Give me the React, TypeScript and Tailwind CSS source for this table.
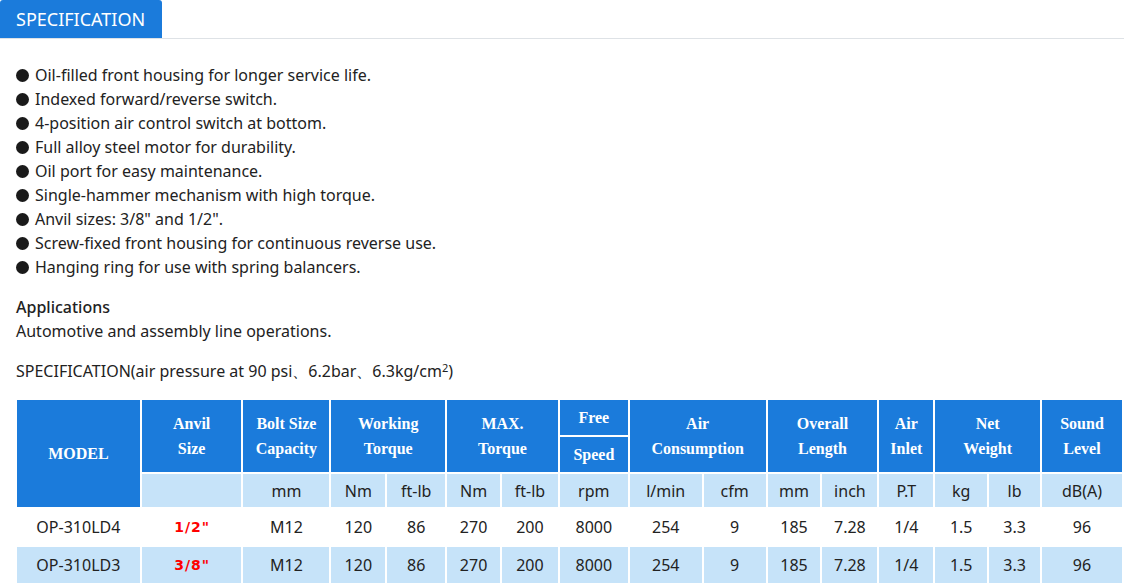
const features = [
  "Oil-filled front housing for longer service life.",
  "Indexed forward/reverse switch.",
  "4-position air control switch at bottom.",
  "Full alloy steel motor for durability.",
  "Oil port for easy maintenance.",
  "Single-hammer mechanism with high torque.",
  'Anvil sizes: 3/8" and 1/2".',
  "Screw-fixed front housing for continuous reverse use.",
  "Hanging ring for use with spring balancers.",
];

const rows = [
  { model: "OP-310LD4", anvil: '1/2"', vals: ["M12", "120", "86", "270", "200", "8000", "254", "9", "185", "7.28", "1/4", "1.5", "3.3", "96"] },
  { model: "OP-310LD3", anvil: '3/8"', vals: ["M12", "120", "86", "270", "200", "8000", "254", "9", "185", "7.28", "1/4", "1.5", "3.3", "96"] },
];

const units = ["", "mm", "Nm", "ft-lb", "Nm", "ft-lb", "rpm", "l/min", "cfm", "mm", "inch", "P.T", "kg", "lb", "dB(A)"];
const widths = [123, 100, 86, 54, 58, 53, 56, 68, 72, 62, 53, 55, 54, 52, 51, 80];

const th = "bg-[#1b7bdb] text-white font-bold text-[16px] leading-[25px] text-center align-middle font-['Liberation_Serif',serif] p-0";
const unitTd = "bg-[#c6e3f9] h-[33px] text-center p-0";

export default function App() {
  return (
    <div className="min-h-[583px] w-[1124px] overflow-hidden bg-white font-['Noto_Sans',sans-serif] text-[#222]">
      <div className="flex border-b border-[#dee2e6]">
        <div className="h-[38px] w-[162px] rounded-t-[3px] bg-[#1b7bdb] pl-4 text-[18px] leading-[38px] text-white">
          SPECIFICATION
        </div>
      </div>

      <ul className="mt-[24px] pl-4 text-[16px] leading-[24px]">
        {features.map((f) => (
          <li key={f} className="flex items-center gap-[6px]">
            <span className="h-[13px] w-[13px] shrink-0 rounded-full bg-[#1a1a1a]" />
            <span>{f}</span>
          </li>
        ))}
      </ul>

      <div className="mt-[16px] pl-4 text-[16px] leading-[24px]">
        <div className="font-medium">Applications</div>
        <div>Automotive and assembly line operations.</div>
      </div>

      <div className="mt-[16px] pl-4 text-[16px] leading-[24px]">
        SPECIFICATION(air pressure at 90 psi、6.2bar、6.3kg/cm<sup className="text-[11px]">2</sup>)
      </div>

      <table className="ml-[15px] mt-[15px] table-fixed border-separate border-spacing-[2px] text-[16px]">
        <colgroup>
          {widths.map((w, i) => (
            <col key={i} style={{ width: w }} />
          ))}
        </colgroup>
        <thead>
          <tr className="h-[35px]">
            <th rowSpan={3} className={th}>MODEL</th>
            <th rowSpan={2} className={th}>Anvil<br />Size</th>
            <th rowSpan={2} className={th}>Bolt Size<br />Capacity</th>
            <th rowSpan={2} colSpan={2} className={th}>Working<br />Torque</th>
            <th rowSpan={2} colSpan={2} className={th}>MAX.<br />Torque</th>
            <th className={th}>Free</th>
            <th rowSpan={2} colSpan={2} className={th}>Air<br />Consumption</th>
            <th rowSpan={2} colSpan={2} className={th}>Overall<br />Length</th>
            <th rowSpan={2} className={th}>Air<br />Inlet</th>
            <th rowSpan={2} colSpan={2} className={th}>Net<br />Weight</th>
            <th rowSpan={2} className={th}>Sound<br />Level</th>
          </tr>
          <tr className="h-[35px]">
            <th className={th}>Speed</th>
          </tr>
          <tr>
            {units.map((u, i) => (
              <td key={i} className={unitTd}>{u}</td>
            ))}
          </tr>
        </thead>
        <tbody>
          {rows.map((r, ri) => {
            const bg = ri % 2 === 1 ? "bg-[#c6e3f9]" : "";
            return (
              <tr key={r.model}>
                <td className={`h-[36px] p-0 text-center ${bg}`}>{r.model}</td>
                <td className={`p-0 pl-[1px] text-center font-['DejaVu_Sans',sans-serif] text-[14px] font-bold tracking-[1px] text-[#f00] ${bg}`}>{r.anvil}</td>
                {r.vals.map((v, i) => (
                  <td key={i} className={`p-0 text-center ${bg}`}>{v}</td>
                ))}
              </tr>
            );
          })}
        </tbody>
      </table>
    </div>
  );
}
